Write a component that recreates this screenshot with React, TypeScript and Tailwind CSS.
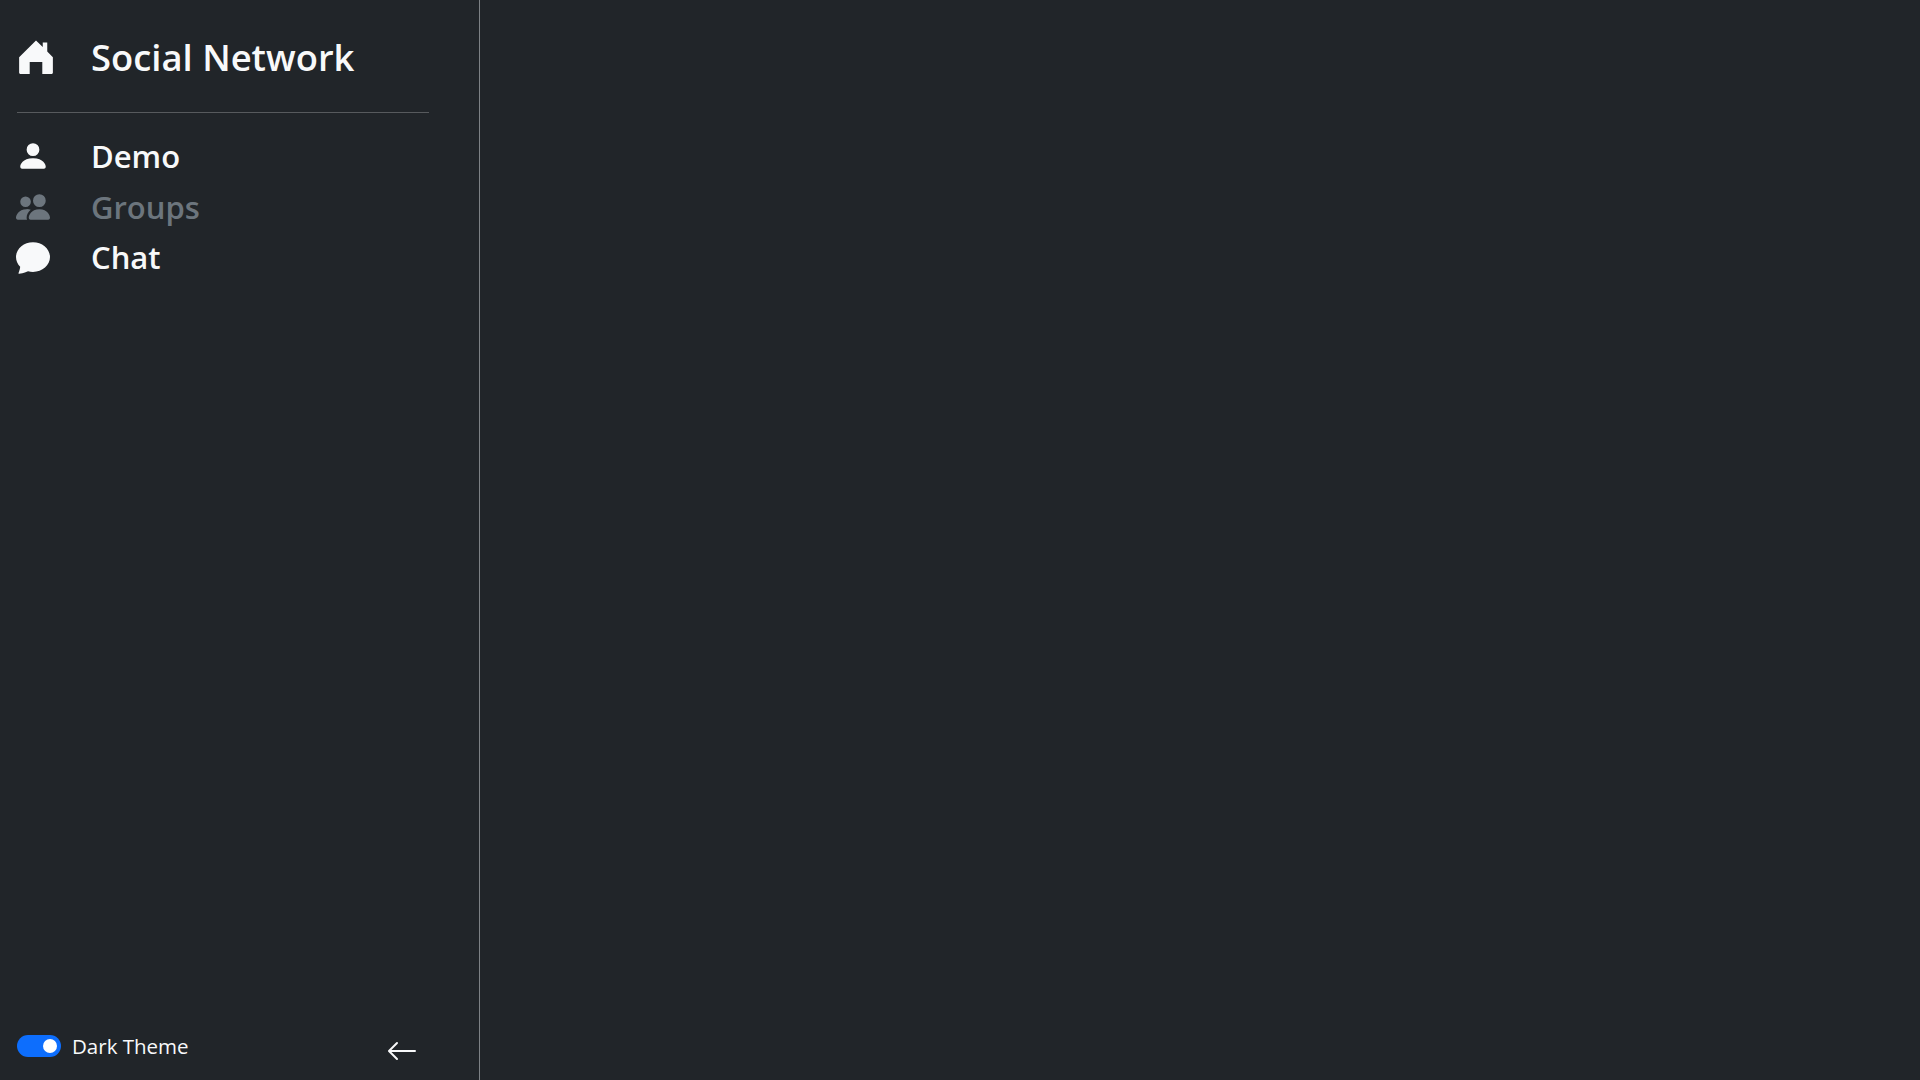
import React from 'react';
import { BsArrowLeft, BsChatFill, BsPeopleFill, BsPersonFill } from 'react-icons/bs';

const items = [
  { label: 'Demo', icon: BsPersonFill, muted: false },
  { label: 'Groups', icon: BsPeopleFill, muted: true },
  { label: 'Chat', icon: BsChatFill, muted: false },
];

function HouseIcon({ className }: { className?: string }) {
  return (
    <svg viewBox="0 0 16 16" fill="currentColor" className={className}>
      <path d="M8 .7 11 3.6V1.5h2v4.1l2.5 2.5V15a.5.5 0 0 1-.5.5h-4.2V10.2H5.2v5.3H1a.5.5 0 0 1-.5-.5V8.1z" />
    </svg>
  );
}

export default function App() {
  return (
    <div className="flex h-screen bg-[#212529] text-[#f8f9fa] font-['Open_Sans',sans-serif]">
      <aside className="flex w-[480px] flex-col border-r border-[#7d8185] pl-[17px] pr-[50px]">
        <div className="flex h-[113px] items-center border-b border-[#575a5d] pt-[2px]">
          <HouseIcon className="ml-[1px] h-[36px] w-[36px] shrink-0 text-[#f8f9fa]" />
          <span className="ml-[37px] text-[36.4px] font-semibold">Social Network</span>
        </div>
        <nav className="mt-[18px] flex flex-col">
          {items.map(({ label, icon: Icon, muted }) => (
            <a key={label} className={`flex h-[50.5px] items-center ${muted ? 'text-[#6c757d]' : 'text-[#f8f9fa]'}`}>
              <Icon className="-ml-[1px] h-[34px] w-[34px] shrink-0" />
              <span className="ml-[41px] text-[31px] font-semibold">{label}</span>
            </a>
          ))}
        </nav>
        <div className="mt-auto flex h-[60px] items-start justify-between">
          <label className="mt-[11px] flex items-center">
            <span className="flex h-[22px] w-[44px] items-center justify-end rounded-full bg-[#0d6efd] pr-[4px]">
              <span className="h-[14px] w-[14px] rounded-full bg-white" />
            </span>
            <span className="ml-[11px] text-[20.5px]">Dark Theme</span>
          </label>
          <BsArrowLeft className="mt-[15px] mr-[11px] h-[32px] w-[32px]" />
        </div>
      </aside>
      <main className="flex-1" />
    </div>
  );
}
